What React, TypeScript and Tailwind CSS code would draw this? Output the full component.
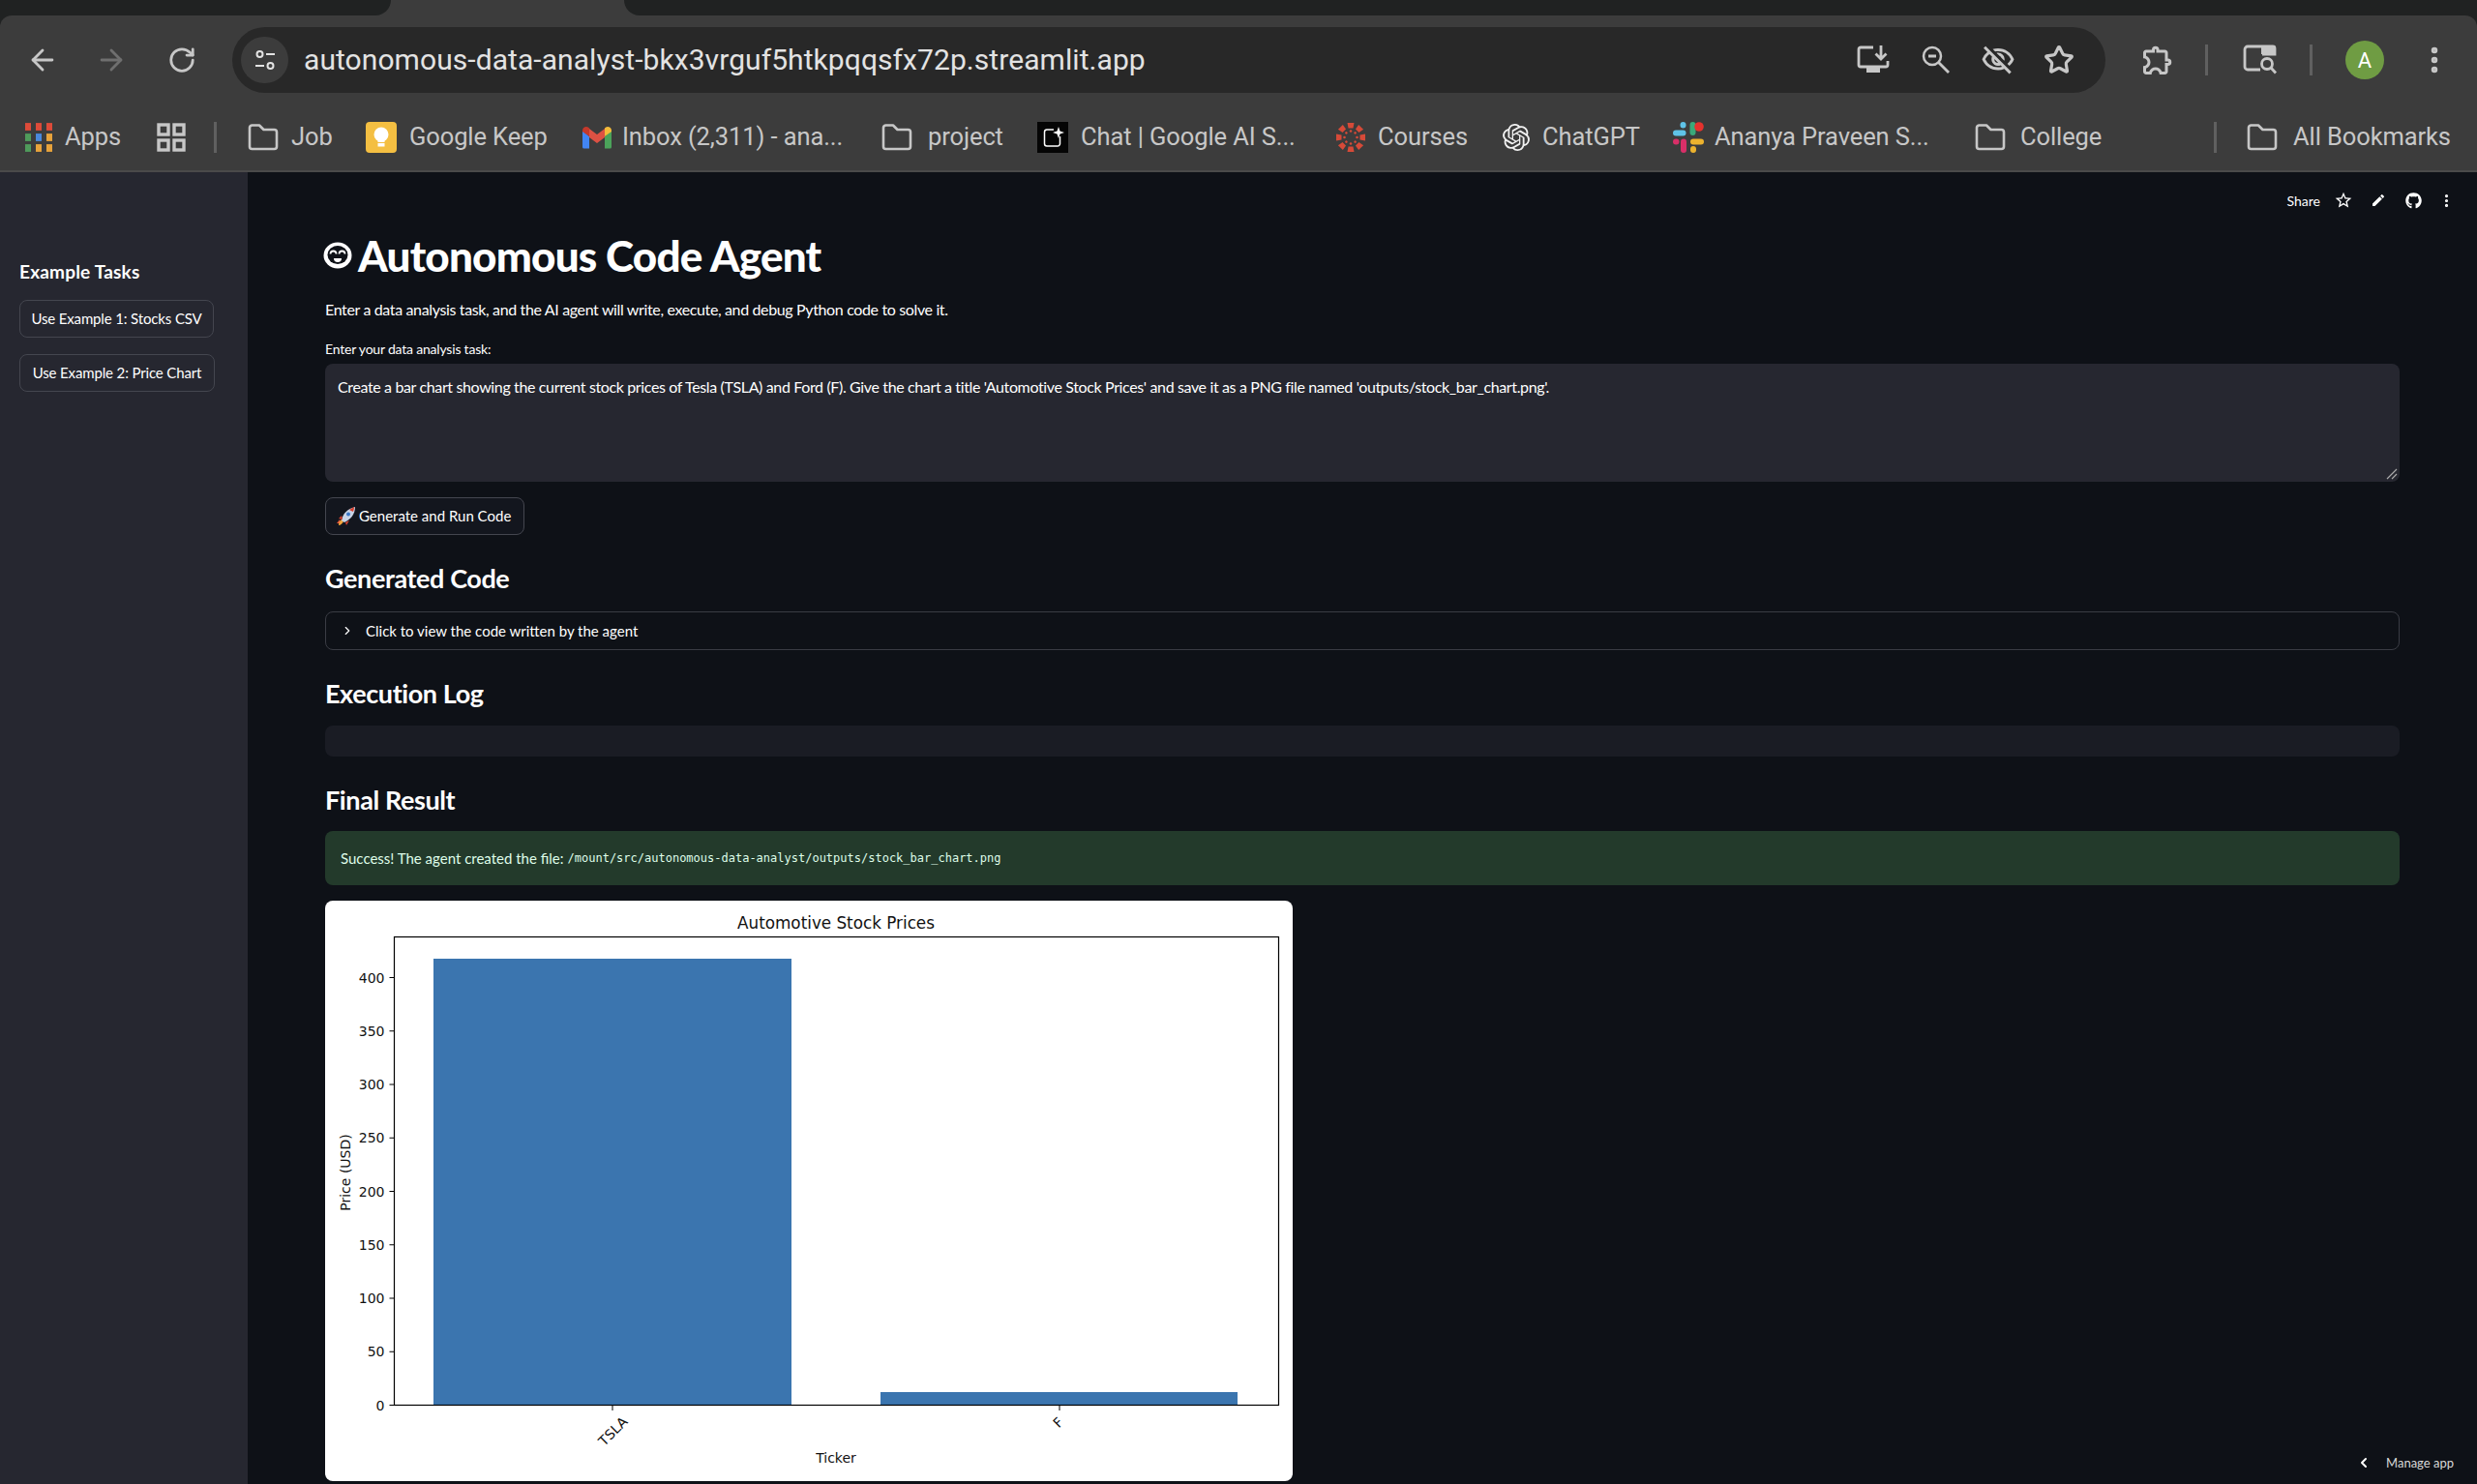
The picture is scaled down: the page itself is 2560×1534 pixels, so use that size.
import React from "react";
import { ArrowLeft, ArrowRight, RotateCw, Star, EllipsisVertical, ChevronRight, ChevronLeft } from "lucide-react";
import { MdOutlineExtension, MdOutlineVisibilityOff, MdEdit, MdStarBorder } from "react-icons/md";
import { FaGithub } from "react-icons/fa";
import { SiOpenai } from "react-icons/si";

function FolderIcon() {
  return (
    <svg viewBox="0 0 32 30" className="w-8 h-[30px] shrink-0" fill="none" stroke="#c7c7c7" strokeWidth="2.6" strokeLinejoin="round">
      <path d="M2 5a2.500 2.500 0 0 1 2.500-2.500h7.500l4.500 4.500h11a2.500 2.500 0 0 1 2.500 2.500v15a2.500 2.500 0 0 1-2.500 2.500h-23a2.500 2.500 0 0 1-2.500-2.500z" />
    </svg>
  );
}

function AppsIcon() {
  const c = ["#dd4b39", "#dd4b39", "#dd4b39", "#4f9b5b", "#4a89dc", "#e8a33b", "#4f9b5b", "#e8a33b", "#e8a33b"];
  return (
    <div className="grid grid-cols-3 gap-[5px] w-[28px] shrink-0">
      {c.map((x, i) => (
        <div key={i} className="h-[6px] w-[6px] scale-y-[1.3]" style={{ background: x }} />
      ))}
    </div>
  );
}

function GridIcon() {
  return (
    <svg viewBox="0 0 30 30" className="w-[30px] h-[30px]" fill="none" stroke="#c7c7c7" strokeWidth="3.4">
      <rect x="2" y="2" width="10" height="10" />
      <rect x="18" y="2" width="10" height="10" />
      <rect x="2" y="18" width="10" height="10" />
      <rect x="18" y="18" width="10" height="10" />
    </svg>
  );
}

function KeepIcon() {
  return (
    <svg viewBox="0 0 32 32" className="w-8 h-8 shrink-0">
      <rect width="32" height="32" rx="4" fill="#f4bf42" />
      <circle cx="16" cy="13" r="7.500" fill="#fff" />
      <rect x="12.500" y="18" width="7" height="3" fill="#fff" />
      <rect x="12.500" y="22" width="7" height="3.500" fill="#fff" />
    </svg>
  );
}

function GmailIcon() {
  return (
    <svg viewBox="0 0 32 24" className="w-8 h-6 shrink-0">
      <path d="M1 5v17a1.500 1.500 0 0 0 1.500 1.500H8V11z" fill="#4285f4" />
      <path d="M31 5v17a1.500 1.500 0 0 1-1.500 1.500H24V11z" fill="#4ba35a" />
      <path d="M8 3v9l8 6 8-6V3l-8 6z" fill="#dd5143" />
      <path d="M1 5c0-3.500 4-5 6.500-3L8 2.500V11L1 6z" fill="#c5392b" />
      <path d="M31 5c0-3.500-4-5-6.500-3L24 2.500V11l7-5z" fill="#f3bb3a" />
    </svg>
  );
}

function AiStudioIcon() {
  return (
    <svg viewBox="0 0 32 32" className="w-8 h-8 shrink-0">
      <rect width="32" height="32" fill="#050505" />
      <path d="M17 8H10a2.500 2.500 0 0 0-2.500 2.500v12a2.500 2.500 0 0 0 2.500 2.500h11a2.500 2.500 0 0 0 2.500-2.500V15" fill="none" stroke="#fff" strokeWidth="1.500" />
      <path d="M22 5l1.500 4.500L28 11l-4.500 1.500L22 17l-1.500-4.500L16 11l4.500-1.500z" fill="#fff" />
    </svg>
  );
}

function CanvasIcon() {
  const dots = [0, 45, 90, 135, 180, 225, 270, 315];
  return (
    <svg viewBox="0 0 32 32" className="w-8 h-8 shrink-0">
      {dots.map((a) => (
        <g key={a} transform={`rotate(${a} 16 16)`}>
          <path d="M12.500 1h7l-1 5.500h-5z" fill="#d64a38" />
          <circle cx="16" cy="9.500" r="1.300" fill="#d64a38" />
        </g>
      ))}
    </svg>
  );
}

function SlackIcon() {
  return (
    <svg viewBox="0 0 32 32" className="w-8 h-8 shrink-0">
      <rect x="0" y="8.500" width="13.500" height="6" rx="3" fill="#5fc3e8" />
      <rect x="7.500" y="0" width="6" height="6.500" rx="3" fill="#5fc3e8" />
      <rect x="17.500" y="0" width="6" height="14" rx="3" fill="#3aa97a" />
      <circle cx="27" cy="5" r="4.800" fill="#e5322d" />
      <rect x="18" y="17.500" width="14" height="6" rx="3" fill="#ecb22e" />
      <rect x="18" y="25" width="6" height="7" rx="3" fill="#ecb22e" />
      <rect x="0" y="17.500" width="6.500" height="6" rx="3" fill="#d82f68" />
      <rect x="8" y="17.500" width="6" height="14.500" rx="3" fill="#d82f68" />
    </svg>
  );
}

function InstallIcon() {
  return (
    <svg viewBox="0 0 34 30" className="w-[34px] h-[30px]" fill="none" stroke="#c7c7c7" strokeWidth="2.800">
      <path d="M17 2H4a2 2 0 0 0-2 2v16a2 2 0 0 0 2 2h26a2 2 0 0 0 2-2v-4" />
      <rect x="10" y="23" width="14" height="5" fill="#c7c7c7" stroke="none" />
      <path d="M25 0v13M19.500 8.500l5.500 5.500 5.500-5.500" />
    </svg>
  );
}

function ZoomOutIcon() {
  return (
    <svg viewBox="0 0 32 32" className="w-8 h-8" fill="none" stroke="#c7c7c7" strokeWidth="2.500">
      <circle cx="13" cy="12" r="9" />
      <path d="M9 12h8" strokeWidth="3" />
      <path d="M19.500 18.500L30 29" strokeWidth="2.800" />
    </svg>
  );
}

function SideSearchIcon() {
  return (
    <svg viewBox="0 0 36 32" className="w-[36px] h-8" fill="none" stroke="#c7c7c7" strokeWidth="2.800">
      <path d="M18 26H5a3 3 0 0 1-3-3V5a3 3 0 0 1 3-3h26a2 2 0 0 1 2 2v6H20" />
      <path d="M19 2h14v8H19z" fill="#c7c7c7" stroke="none" />
      <circle cx="25" cy="20" r="5.500" />
      <path d="M29 24l5 5.500" />
    </svg>
  );
}

function TuneIcon() {
  return (
    <svg viewBox="0 0 24 24" className="w-6 h-6" fill="none" stroke="#e3e3e3" strokeWidth="2">
      <circle cx="6.500" cy="6" r="3" />
      <path d="M13 6h9M2 18h9" />
      <circle cx="17.500" cy="18" r="3" />
    </svg>
  );
}

function SmileEmoji() {
  return (
    <svg viewBox="0 0 30 28" className="w-[30px] h-[28px] shrink-0">
      <ellipse cx="15" cy="14" rx="14.500" ry="13.500" fill="#fff" />
      <ellipse cx="15" cy="13.500" rx="10.500" ry="9.500" fill="#0e1117" />
      <path d="M7.500 12.500a3 3 0 0 1 6 0M16.500 12.500a3 3 0 0 1 6 0" fill="none" stroke="#fff" strokeWidth="1.800" />
      <path d="M11 17h8a4 4 0 0 1-8 0z" fill="#fff" />
    </svg>
  );
}

function RocketEmoji() {
  return (
    <svg viewBox="0 0 20 22" className="w-5 h-[22px] shrink-0">
      <path d="M3 14l-3 4 4 0z" fill="#e0503a" />
      <path d="M2 20c0-3 1-5 3-6l2 2c-1 2-3 4-5 4z" fill="#f2a33a" />
      <path d="M5 15C6 8 11 3 19 1c0 8-5 13-11 16z" fill="#c8d3e6" />
      <path d="M13 4l5-3c0 2-.5 3.500-1 5z" fill="#d8412f" />
      <circle cx="12" cy="8.500" r="2" fill="#3c78c8" />
      <path d="M5 10l-3 3 4 1zM9 17l1 3 3-5z" fill="#d8412f" />
    </svg>
  );
}

function Bookmark({ w, icon, label, gap = "gap-[13px]" }: { w: string; icon: React.ReactNode; label: string; gap?: string }) {
  return (
    <div className={`${w} shrink-0 flex items-center ${gap}`}>
      {icon}
      <span className="text-[25.5px] tracking-[-0.1px] leading-none text-[#c7c7c7] whitespace-nowrap font-['Roboto',sans-serif]">{label}</span>
    </div>
  );
}

function Chart() {
  const ticks = [0, 50, 100, 150, 200, 250, 300, 350, 400];
  const dv = "font-['DejaVu_Sans',sans-serif]";
  return (
    <svg viewBox="0 0 1000 600" className="w-[1000px] h-[600px]">
      <rect x="112" y="60" width="370" height="461.500" fill="#3b75af" />
      <rect x="574" y="508" width="369" height="13.500" fill="#3b75af" />
      <rect x="71.500" y="37.500" width="914" height="484" fill="none" stroke="#000" strokeWidth="1.200" />
      {ticks.map((t) => {
        const y = 521.5 - t * 1.105;
        return (
          <g key={t}>
            <line x1="66.500" x2="71.500" y1={y} y2={y} stroke="#000" strokeWidth="1" />
            <text x="61.500" y={y + 5} textAnchor="end" fontSize="14" fill="#111" className={dv}>
              {t}
            </text>
          </g>
        );
      })}
      <line x1="297" x2="297" y1="521.500" y2="527" stroke="#000" />
      <line x1="759" x2="759" y1="521.500" y2="527" stroke="#000" />
      <text x="528" y="29" textAnchor="middle" fontSize="16.800" fill="#111" className={dv}>
        Automotive Stock Prices
      </text>
      <text x="528" y="581" textAnchor="middle" fontSize="14" fill="#111" className={dv}>
        Ticker
      </text>
      <text transform="translate(26 281) rotate(-90)" textAnchor="middle" fontSize="14" fill="#111" className={dv}>
        Price (USD)
      </text>
      <text transform="translate(301 552) rotate(-45)" textAnchor="middle" fontSize="14" fill="#111" className={dv}>
        TSLA
      </text>
      <text transform="translate(761 543) rotate(-45)" textAnchor="middle" fontSize="14" fill="#111" className={dv}>
        F
      </text>
    </svg>
  );
}

function Heading({ children, mt }: { children: React.ReactNode; mt: string }) {
  return <h2 className={`${mt} h-9 flex items-center text-[27px] font-bold text-white tracking-[-0.4px]`}>{children}</h2>;
}

function SideButton({ children, w }: { children: React.ReactNode; w: string }) {
  return (
    <button className={`${w} h-[39px] rounded-lg border border-[#44464f] flex items-center justify-center text-[15px] tracking-[-0.14px] text-white whitespace-nowrap`}>
      {children}
    </button>
  );
}

export default function App() {
  return (
    <div className="relative w-[2560px] h-[1534px] overflow-hidden flex flex-col bg-[#0e1117] font-['Lato',sans-serif]">
      {/* tab strip */}
      <div className="h-4 flex bg-[#3c3c3c] shrink-0">
        <div className="w-[404px] bg-[#202222] rounded-br-2xl" />
        <div className="w-[241px]" />
        <div className="flex-1 bg-[#202222] rounded-bl-2xl" />
      </div>
      {/* toolbar */}
      <div className="bg-[#202222] shrink-0">
        <div className="h-[160px] bg-[#3c3c3c] rounded-t-[12px] flex flex-col">
          <div className="h-[80px] flex items-center pt-[12px] pb-0">
            <div className="w-[240px] flex items-center shrink-0 pl-[27px]">
              <ArrowLeft size={34} color="#c7c7c7" strokeWidth={2} />
              <ArrowRight size={34} color="#6f6f6f" strokeWidth={2} className="ml-[37px]" />
              <RotateCw size={30} color="#c7c7c7" strokeWidth={2.200} className="ml-[41px]" />
            </div>
            <div className="w-[1936px] h-[68px] rounded-full bg-[#282828] flex items-center pl-[9px] pr-[12px] shrink-0">
              <div className="w-[49px] h-[48px] rounded-full bg-[#3c3c3c] flex items-center justify-center shrink-0">
                <TuneIcon />
              </div>
              <span className="ml-[16px] text-[30px] leading-none tracking-[0.07px] text-[#e3e3e3] whitespace-nowrap font-['Roboto',sans-serif]">
                autonomous-data-analyst-bkx3vrguf5htkpqqsfx72p.streamlit.app
              </span>
              <div className="ml-auto flex items-center gap-[31px] pr-[20px]">
                <InstallIcon />
                <ZoomOutIcon />
                <MdOutlineVisibilityOff size={36} color="#c7c7c7" />
                <Star size={32} color="#c7c7c7" strokeWidth={2.400} className="-ml-[2px]" />
              </div>
            </div>
            <div className="flex items-center pl-[36px]">
              <MdOutlineExtension size={36} color="#c7c7c7" />
              <div className="w-[3px] h-[32px] bg-[#606060] ml-[31px]" />
              <div className="ml-[36px]">
                <SideSearchIcon />
              </div>
              <div className="w-[3px] h-[32px] bg-[#606060] ml-[33px]" />
              <div className="ml-[34px] w-10 h-10 rounded-full bg-[#6f9c43] flex items-center justify-center text-[22px] text-white font-['Roboto',sans-serif]">
                A
              </div>
              <EllipsisVertical size={34} color="#c7c7c7" strokeWidth={2.600} className="ml-[35px]" />
            </div>
          </div>
          <div className="h-[64px] flex items-center pl-[26px] mt-[14px]">
            <Bookmark w="w-[136px]" icon={<AppsIcon />} label="Apps" />
            <div className="w-[59px] shrink-0">
              <GridIcon />
            </div>
            <div className="w-[35px] shrink-0">
              <div className="w-[3px] h-[32px] bg-[#606060]" />
            </div>
            <Bookmark w="w-[122px]" icon={<FolderIcon />} label="Job" />
            <Bookmark w="w-[223px]" icon={<KeepIcon />} label="Google Keep" />
            <Bookmark w="w-[310px]" icon={<GmailIcon />} label="Inbox (2,311) - ana..." gap="gap-[10px]" />
            <Bookmark w="w-[161px]" icon={<FolderIcon />} label="project" gap="gap-[16px]" />
            <Bookmark w="w-[308px]" icon={<AiStudioIcon />} label="Chat | Google AI S..." />
            <Bookmark w="w-[173px]" icon={<CanvasIcon />} label="Courses" gap="gap-[12px]" />
            <Bookmark w="w-[176px]" icon={<SiOpenai size={28} color="#f0f0f0" className="shrink-0" />} label="ChatGPT" />
            <Bookmark w="w-[312px]" icon={<SlackIcon />} label="Ananya Praveen S..." gap="gap-[11px]" />
            <Bookmark w="w-[247px]" icon={<FolderIcon />} label="College" gap="gap-[15px]" />
            <div className="w-[34px] shrink-0">
              <div className="w-[3px] h-[32px] bg-[#606060]" />
            </div>
            <Bookmark w="w-[210px]" icon={<FolderIcon />} label="All Bookmarks" gap="gap-[16px]" />
          </div>
        </div>
      </div>
      {/* page */}
      <div className="flex-1 flex min-h-0 border-t-2 border-[#4a4a4a]">
        <aside className="w-[256px] shrink-0 bg-[#262730] pl-5 flex flex-col">
          <div className="mt-[89px] h-7 flex items-center text-[19px] font-bold text-white tracking-[0.2px]">Example Tasks</div>
          <div className="mt-[15px]">
            <SideButton w="w-[201px]">Use Example 1: Stocks CSV</SideButton>
          </div>
          <div className="mt-[17px]">
            <SideButton w="w-[202px]">Use Example 2: Price Chart</SideButton>
          </div>
        </aside>
        <main className="flex-1 min-w-0 px-[80px] flex flex-col">
          <div className="h-[58px] -mr-[57px] flex items-center justify-end gap-[20px] shrink-0">
            <span className="text-[14px] text-white -mr-[6px]">Share</span>
            <MdStarBorder size={20} color="#fff" className="-mr-[2px]" />
            <MdEdit size={16} color="#fff" />
            <FaGithub size={17} color="#fff" />
            <EllipsisVertical size={17} color="#fff" strokeWidth={2.500} className="-ml-[3px]" />
          </div>
          <h1 className="mt-[2px] h-[52px] flex items-center gap-[6px] text-[44px] font-black text-white -ml-[2px] tracking-[-0.8px] whitespace-nowrap">
            <SmileEmoji />
            Autonomous Code Agent
          </h1>
          <p className="mt-[18px] h-6 flex items-center text-[16px] tracking-[-0.36px] text-white">
            Enter a data analysis task, and the AI agent will write, execute, and debug Python code to solve it.
          </p>
          <label className="mt-[18px] h-5 flex items-center text-[14px] tracking-[-0.2px] text-white">Enter your data analysis task:</label>
          <div className="relative mt-[6px] h-[122px] rounded-lg bg-[#262730] px-[13px] pt-[12px] text-[16px] tracking-[-0.365px] leading-[24px] text-white whitespace-nowrap">
            Create a bar chart showing the current stock prices of Tesla (TSLA) and Ford (F). Give the chart a title 'Automotive Stock Prices' and save it as a PNG file named 'outputs/stock_bar_chart.png'.
            <svg viewBox="0 0 12 12" className="absolute right-[2px] bottom-[2px] w-3 h-3" stroke="#aaa" strokeWidth="1.200">
              <path d="M1 11L11 1M6 11l5-5" />
            </svg>
          </div>
          <button className="mt-[16px] h-[39px] w-[206px] rounded-lg border border-[#44464f] bg-[#13161e] flex items-center gap-[3px] pl-[11px] text-[15px] text-white whitespace-nowrap">
            <RocketEmoji />
            Generate and Run Code
          </button>
          <Heading mt="mt-[27px]">Generated Code</Heading>
          <div className="mt-[16px] h-10 rounded-lg border border-[#3a3c44] flex items-center pl-[15px] text-[15px] text-white">
            <ChevronRight size={14} strokeWidth={2} className="mr-[12px]" />
            Click to view the code written by the agent
          </div>
          <Heading mt="mt-[27px]">Execution Log</Heading>
          <div className="mt-[15px] h-8 rounded-lg bg-[#1a1c24]" />
          <Heading mt="mt-[27px]">Final Result</Heading>
          <div className="mt-[14px] h-14 rounded-lg bg-[#233a2b] flex items-center pl-[16px] text-[15px] text-[#dffde9] whitespace-nowrap">
            Success! The agent created the file:
            <code className="ml-[4px] text-[12px] font-['DejaVu_Sans_Mono','Liberation_Mono',monospace]">
              /mount/src/autonomous-data-analyst/outputs/stock_bar_chart.png
            </code>
          </div>
          <div className="mt-[16px] w-[1000px] h-[600px] shrink-0 rounded-lg bg-white overflow-hidden">
            <Chart />
          </div>
        </main>
      </div>
      <div className="absolute right-[24px] bottom-[12px] flex items-center text-[13px] text-[#d8d8d8]">
        <ChevronLeft size={16} strokeWidth={3} color="#fff" />
        <span className="ml-[15px]">Manage app</span>
      </div>
    </div>
  );
}
